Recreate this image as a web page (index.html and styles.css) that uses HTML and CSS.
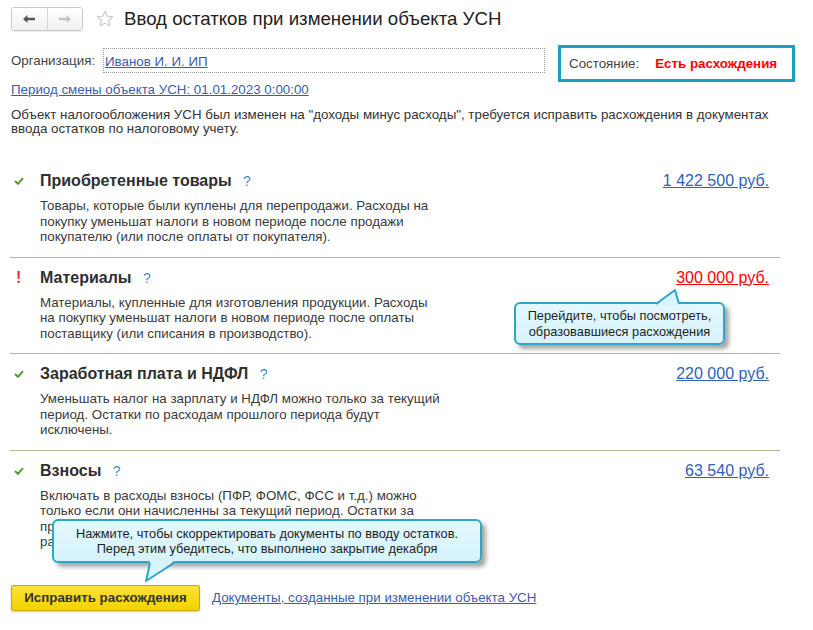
FILE: index.html
```html
<!DOCTYPE html>
<html lang="ru">
<head>
<meta charset="utf-8">
<title>Ввод остатков при изменении объекта УСН</title>
<link rel="stylesheet" href="styles.css">
</head>
<body>
<div class="page">
  <header class="topbar">
    <div class="nav">
      <span class="nav-btn">
        <svg width="12" height="8" viewBox="0 0 12 8"><path d="M0 4 L4.5 0 V2.8 H12 V5.2 H4.5 V8 Z" fill="#555"/></svg>
      </span>
      <span class="nav-btn nav-btn--off">
        <svg width="12" height="8" viewBox="0 0 12 8"><path d="M12 4 L7.5 0 V2.8 H0 V5.2 H7.5 V8 Z" fill="#c4c4c4"/></svg>
      </span>
    </div>
    <svg class="star" width="18" height="18" viewBox="0 0 18 18"><path d="M9 1.2 L11.3 6.3 L16.8 6.8 L12.6 10.5 L13.9 16 L9 13.1 L4.1 16 L5.4 10.5 L1.2 6.8 L6.7 6.3 Z" fill="none" stroke="#c9c9c9" stroke-width="1.1" stroke-linejoin="round"/></svg>
    <h1 class="title">Ввод остатков при изменении объекта УСН</h1>
  </header>

  <section class="info">
    <div class="info-left">
      <div class="org-row">
        <span class="label">Организация:</span>
        <div class="org-field"><a class="link">Иванов И. И. ИП</a></div>
      </div>
      <a class="link period">Период смены объекта УСН: 01.01.2023 0:00:00</a>
    </div>
    <div class="state">
      <span class="state-label">Состояние:</span>
      <span class="state-value">Есть расхождения</span>
    </div>
  </section>

  <p class="note">Объект налогообложения УСН был изменен на "доходы минус расходы", требуется исправить расхождения в документах<br>ввода остатков по налоговому учету.</p>

  <div class="rows">
    <div class="row">
      <div class="row-icon"><svg width="10" height="8" viewBox="0 0 10 8"><path d="M1 4 L4 6.8 L9 1.2" fill="none" stroke="#4d9a2c" stroke-width="2"/></svg></div>
      <div class="row-body">
        <div class="row-title">Приобретенные товары <span class="help">?</span></div>
        <p class="row-desc">Товары, которые были куплены для перепродажи. Расходы на<br>покупку уменьшат налоги в новом периоде после продажи<br>покупателю (или после оплаты от покупателя).</p>
      </div>
      <a class="amount">1 422 500 руб.</a>
    </div>
    <div class="row">
      <div class="row-icon"><span class="warn">!</span></div>
      <div class="row-body">
        <div class="row-title">Материалы <span class="help">?</span></div>
        <p class="row-desc">Материалы, купленные для изготовления продукции. Расходы<br>на покупку уменьшат налоги в новом периоде после оплаты<br>поставщику (или списания в производство).</p>
      </div>
      <a class="amount amount--red">300 000 руб.</a>
    </div>
    <div class="row">
      <div class="row-icon"><svg width="10" height="8" viewBox="0 0 10 8"><path d="M1 4 L4 6.8 L9 1.2" fill="none" stroke="#4d9a2c" stroke-width="2"/></svg></div>
      <div class="row-body">
        <div class="row-title">Заработная плата и НДФЛ <span class="help">?</span></div>
        <p class="row-desc">Уменьшать налог на зарплату и НДФЛ можно только за текущий<br>период. Остатки по расходам прошлого периода будут<br>исключены.</p>
      </div>
      <a class="amount">220 000 руб.</a>
    </div>
    <div class="row row--last">
      <div class="row-icon"><svg width="10" height="8" viewBox="0 0 10 8"><path d="M1 4 L4 6.8 L9 1.2" fill="none" stroke="#4d9a2c" stroke-width="2"/></svg></div>
      <div class="row-body">
        <div class="row-title">Взносы <span class="help">?</span></div>
        <p class="row-desc">Включать в расходы взносы (ПФР, ФОМС, ФСС и т.д.) можно<br>только если они начисленны за текущий период. Остатки за<br>прошлый период будут исключены из<br>расходов.</p>
      </div>
      <a class="amount">63 540 руб.</a>
    </div>
  </div>

  <footer class="footer">
    <span class="btn-primary">Исправить расхождения</span>
    <a class="link footer-link">Документы, созданные при изменении объекта УСН</a>
  </footer>

  <div class="tip tip--amount">
    <svg class="tip-arrow tip-arrow--up" width="28" height="18" viewBox="0 0 28 18"><path d="M2 17.5 L21 2 L25 17.5 Z" fill="#d8f4fc"/><path d="M2 16 L21 2 L25 16" fill="none" stroke="#2ea6c6" stroke-width="2" stroke-linejoin="round"/></svg>
    Перейдите, чтобы посмотреть,<br>образовавшиеся расхождения
  </div>

  <div class="tip tip--button">
    <svg class="tip-arrow tip-arrow--down" width="34" height="22" viewBox="0 0 34 22"><path d="M6 0 L2 20 L30 0 Z" fill="#d8f4fc"/><path d="M6 2 L2 20 L30 2" fill="none" stroke="#2ea6c6" stroke-width="2" stroke-linejoin="round"/></svg>
    Нажмите, чтобы скорректировать документы по вводу остатков.<br>Перед этим убедитесь, что выполнено закрытие декабря
  </div>
</div>
</body>
</html>
```

FILE: styles.css
```css
* { box-sizing: border-box; }

html, body {
  margin: 0;
  padding: 0;
  background: #ffffff;
}

body {
  font-family: "Liberation Sans", Arial, sans-serif;
  font-size: 13.33px;
  color: #333333;
}

.page {
  position: relative;
  width: 813px;
  height: 630px;
  padding-left: 10px;
  overflow: hidden;
}

/* Top bar */
.topbar {
  display: flex;
  align-items: center;
  height: 38px;
  padding-left: 1px;
}

.nav {
  display: flex;
  width: 72px;
  height: 24px;
  border: 1px solid #c9c9c9;
  border-radius: 3px;
  box-shadow: 0 1px 1px rgba(0,0,0,0.08);
  overflow: hidden;
}

.nav-btn {
  flex: 1;
  display: flex;
  align-items: center;
  justify-content: center;
  background: linear-gradient(#ffffff, #f1f1f1);
}

.nav-btn + .nav-btn {
  border-left: 1px solid #d6d6d6;
}

.star {
  margin-left: 13px;
  margin-top: -1px;
}

.title {
  margin: 0 0 0 10px;
  font-size: 18.67px;
  font-weight: normal;
  color: #222222;
  line-height: 24px;
}

/* Info */
.info {
  display: flex;
  align-items: flex-start;
  margin-top: 7px;
}

.info-left {
  display: flex;
  flex-direction: column;
  align-items: flex-start;
  padding-top: 3px;
  padding-left: 1px;
  width: 548px;
}

.org-row {
  display: flex;
  align-items: center;
  height: 25px;
}

.label {
  width: 92px;
  color: #444444;
}

.org-field {
  width: 442px;
  height: 25px;
  border: 1px dotted #9a9a9a;
  padding: 5px 0 0 1px;
  line-height: 16px;
}

.link {
  color: #3a5caa;
  text-decoration: underline;
  cursor: pointer;
}

.period {
  margin-top: 9px;
  line-height: 16px;
}

.state {
  display: flex;
  align-items: center;
  width: 237px;
  height: 37px;
  border: 3px solid #19a1c2;
  padding-left: 8px;
}

.state-label {
  color: #444444;
}

.state-value {
  margin-left: 16px;
  color: #ff0000;
  font-weight: bold;
}

.note {
  margin: 10px 0 0 1px;
  line-height: 14px;
  color: #333333;
}

/* Rows */
.rows {
  margin-top: 25px;
  width: 770px;
}

.row {
  display: flex;
  align-items: flex-start;
  padding: 10px 11px 12px 0;
  border-bottom: 1px solid #bdb392;
}

.row--last {
  border-bottom: none;
}

.row-icon {
  width: 30px;
  height: 20px;
  display: flex;
  align-items: center;
  padding-left: 4px;
}

.warn {
  color: #e23434;
  font-weight: bold;
  font-size: 16px;
  line-height: 20px;
  padding-left: 2px;
}

.row-body {
  flex: 1;
}

.row-title {
  font-size: 16px;
  font-weight: bold;
  line-height: 20px;
  color: #2f2f2f;
}

.help {
  margin-left: 7px;
  font-size: 14px;
  font-weight: normal;
  color: #3a8fd6;
}

.row-desc {
  margin: 7px 0 0;
  line-height: 15.5px;
  color: #3a3a3a;
}

.amount {
  font-size: 16px;
  line-height: 20px;
  color: #2f62b6;
  text-decoration: underline;
}

.amount--red {
  color: #ff0000;
}

/* Footer */
.footer {
  display: flex;
  align-items: center;
  margin-top: 23px;
  padding-left: 1px;
}

.btn-primary {
  display: flex;
  align-items: center;
  justify-content: center;
  width: 189px;
  height: 26px;
  background: linear-gradient(#fbe23a, #f3d300);
  border: 1px solid #c7a700;
  border-radius: 2px;
  box-shadow: 0 1px 2px rgba(0,0,0,0.2);
  font-weight: bold;
  color: #333333;
}

.footer-link {
  margin-left: 12px;
}

/* Tooltips */
.tip {
  position: absolute;
  background: linear-gradient(#e3f8fe, #d6f3fb);
  border: 2px solid #2ea6c6;
  border-radius: 6px;
  box-shadow: 4px 4px 4px rgba(0,0,0,0.35);
  font-size: 12.8px;
  color: #1e1e1e;
  text-align: center;
}

.tip--amount {
  left: 514px;
  top: 302px;
  width: 211px;
  height: 43px;
  padding-top: 4px;
  line-height: 16px;
}

.tip--button {
  left: 52px;
  top: 519px;
  width: 430px;
  height: 44px;
  padding-top: 5px;
  line-height: 15px;
}

.tip-arrow {
  position: absolute;
}

.tip-arrow--up {
  left: 138px;
  top: -16px;
}

.tip-arrow--down {
  left: 90px;
  top: 40px;
}
```
